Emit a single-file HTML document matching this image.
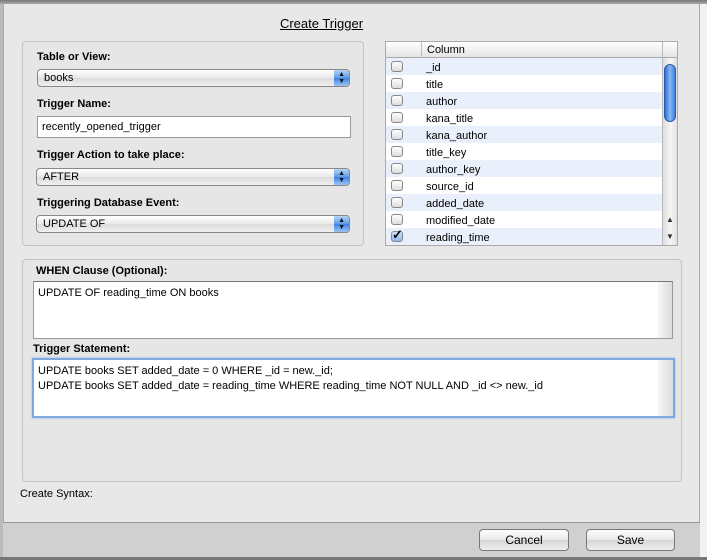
<!DOCTYPE html><html><head><style>
*{box-sizing:border-box;margin:0;padding:0}
body{width:707px;height:560px;overflow:hidden;background:#ececec;font-family:"Liberation Sans",sans-serif;font-size:11px;color:#000;position:relative}
.a{position:absolute}
.dlg{left:3px;top:0;width:697px;height:558px;background:#e8e8e8;border-left:1px solid #aaa;border-right:1px solid #aaa}
.topbar{left:0;top:0;width:707px;height:4px;background:linear-gradient(#777,#aaa)}
.panel{border:1px solid #c4c4c4;border-radius:4px;background:#e6e6e6}
.lbl{font-weight:bold;font-size:11px}
.sel{height:18px;border:1px solid #888;border-radius:4px;background:linear-gradient(#fff,#e8e8e8 50%,#dcdcdc 51%,#f0f0f0);padding:2px 0 0 6px;font-size:11px}
.sel::after{content:"";position:absolute;right:0;top:0;width:15px;height:16px;border-radius:0 3px 3px 0;background:linear-gradient(#b8d4f4,#5c9ae6 50%,#3b83e0 51%,#9cc4f4)}
.sel i{position:absolute;right:4px;top:1px;font-style:normal;font-size:7px;line-height:7px;z-index:2;color:#112}
.row{height:17px;position:absolute;left:0;width:276px;padding:4px 0 0 40px;font-size:11px}
.cb{position:absolute;left:5px;top:3px;width:12px;height:11px;border:1px solid #888;border-radius:3px;background:linear-gradient(#fff,#ddd)}
.ta{background:#fff;border:1px solid #9a9a9a;padding:4px;font-size:11px;line-height:15px}
.btn{height:22px;border:1px solid #777;border-radius:4px;background:linear-gradient(#fdfdfd,#e8e8e8 50%,#d6d6d6 51%,#eee);text-align:center;font-size:12px;padding-top:3px}
</style></head><body>
<div class="a" style="left:700px;top:0;width:7px;height:560px;background:#f2f2f2"></div>
<div class="a dlg"></div>
<div class="a topbar"></div>
<div class="a" style="left:0;top:4px;width:3px;height:556px;background:#bbb"></div>
<div class="a" style="left:0;top:0;width:707px;text-align:center;top:16px;font-size:13px"><span style="text-decoration:underline;position:relative;left:-32px">Create Trigger</span></div>

<div class="a panel" style="left:22px;top:41px;width:342px;height:205px"></div>
<div class="a lbl" style="left:37px;top:51px">Table or View:</div>
<div class="a sel" style="left:37px;top:69px;width:313px">books<i>▲<br>▼</i></div>
<div class="a lbl" style="left:37px;top:98px">Trigger Name:</div>
<div class="a" style="left:37px;top:116px;width:314px;height:22px;background:#fff;border:1px solid #999;padding:4px 0 0 4px">recently_opened_trigger</div>
<div class="a lbl" style="left:37px;top:149px">Trigger Action to take place:</div>
<div class="a sel" style="left:36px;top:168px;width:314px">AFTER<i>▲<br>▼</i></div>
<div class="a lbl" style="left:37px;top:197px">Triggering Database Event:</div>
<div class="a sel" style="left:36px;top:215px;width:314px">UPDATE OF<i>▲<br>▼</i></div>

<div class="a" style="left:385px;top:41px;width:293px;height:205px;border:1px solid #aaa;background:#fff;overflow:hidden">
<div class="a" style="left:0;top:0;width:293px;height:16px;border-bottom:1px solid #aaa;background:linear-gradient(#fff,#e4e4e4)"></div>
<div class="a" style="left:35px;top:0;height:16px;border-left:1px solid #bbb;padding:2px 0 0 5px;font-size:11px">Column</div>
<div class="a" style="left:276px;top:0;height:16px;border-left:1px solid #bbb"></div>
<div class="a" style="left:0;top:16px;width:293px;height:189px">
<div class="row" style="top:0;background:#e9effb"><span class="cb"></span>_id</div>
<div class="row" style="top:17px"><span class="cb"></span>title</div>
<div class="row" style="top:34px;background:#e9effb"><span class="cb"></span>author</div>
<div class="row" style="top:51px"><span class="cb"></span>kana_title</div>
<div class="row" style="top:68px;background:#e9effb"><span class="cb"></span>kana_author</div>
<div class="row" style="top:85px"><span class="cb"></span>title_key</div>
<div class="row" style="top:102px;background:#e9effb"><span class="cb"></span>author_key</div>
<div class="row" style="top:119px"><span class="cb"></span>source_id</div>
<div class="row" style="top:136px;background:#e9effb"><span class="cb"></span>added_date</div>
<div class="row" style="top:153px"><span class="cb"></span>modified_date</div>
<div class="row" style="top:170px;background:#e9effb"><span class="cb" style="background:linear-gradient(#cfe2fb,#8fb8ee)"></span><span class="a" style="left:6px;top:-1px;font-size:13px;font-weight:bold">✓</span>reading_time</div>
<div class="a" style="left:276px;top:0;width:16px;height:189px;background:linear-gradient(90deg,#ddd,#f6f6f6,#ddd);border-left:1px solid #bbb"></div>
<div class="a" style="left:278px;top:6px;width:12px;height:58px;border-radius:6px;background:linear-gradient(90deg,#2a6fd8,#8ab8f2,#3d80e0);border:1px solid #2a5aa8"></div>
<div class="a" style="left:280px;top:157px;font-size:8px;color:#333">▲</div>
<div class="a" style="left:280px;top:174px;font-size:8px;color:#333">▼</div>
</div></div>

<div class="a panel" style="left:22px;top:259px;width:660px;height:223px"></div>
<div class="a lbl" style="left:36px;top:265px">WHEN Clause (Optional):</div>
<div class="a ta" style="left:33px;top:281px;width:640px;height:58px;border-top-color:#777">UPDATE OF reading_time ON books</div>
<div class="a" style="left:658px;top:282px;width:14px;height:56px;background:linear-gradient(90deg,#f6f6f6,#ddd)"></div>
<div class="a lbl" style="left:33px;top:343px">Trigger Statement:</div>
<div class="a ta" style="left:32px;top:358px;width:643px;height:60px;border:2px solid #7ea8e0;box-shadow:0 0 2px #8bb4ea">UPDATE books SET added_date = 0 WHERE _id = new._id;<br>UPDATE books SET added_date = reading_time WHERE reading_time NOT NULL AND _id &lt;&gt; new._id</div>
<div class="a" style="left:658px;top:360px;width:15px;height:56px;background:linear-gradient(90deg,#f6f6f6,#ddd)"></div>
<div class="a" style="left:20px;top:488px">Create Syntax:</div>

<div class="a" style="left:3px;top:522px;width:697px;height:36px;background:#d0d0d0;border-top:1px solid #999"></div>
<div class="a" style="left:0;top:557px;width:707px;height:3px;background:#777"></div>
<div class="a btn" style="left:479px;top:529px;width:90px">Cancel</div>
<div class="a btn" style="left:586px;top:529px;width:89px">Save</div>
</body></html>
